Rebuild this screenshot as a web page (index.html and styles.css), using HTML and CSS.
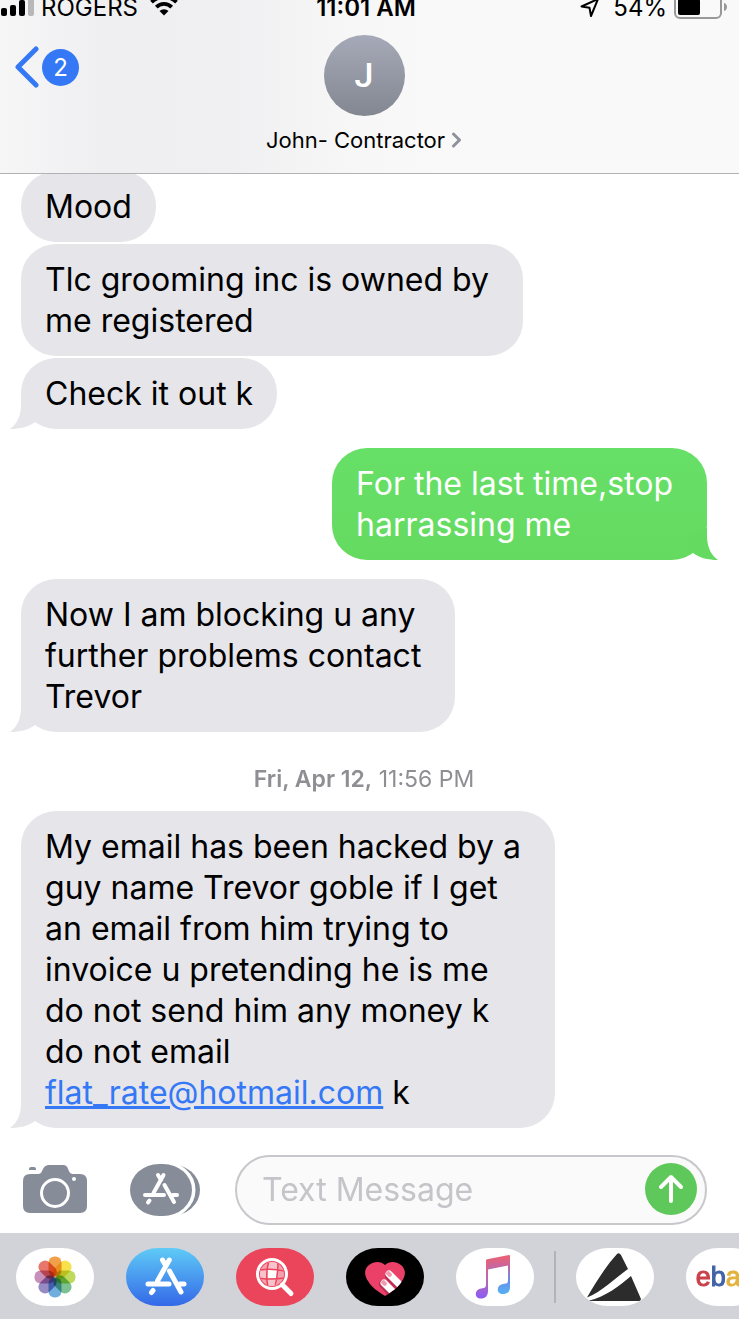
FILE: index.html
```
<!DOCTYPE html>
<html lang="en">
  <head>
    <meta charset="utf-8">
    <meta name="viewport" content="width=device-width, initial-scale=1">
    <title>Messages</title>
    <link rel="stylesheet" href="styles.css">
  </head>
  <body>
    <header class="header">
      <div class="status">
        <div class="status-left">
          <svg class="signal" width="35" height="18" viewBox="0 0 35 18">
            <rect x="1" y="9" width="6" height="8" rx="2"/>
            <rect x="10" y="6" width="6" height="11" rx="2"/>
            <rect x="19" y="1" width="6" height="16" rx="2"/>
            <rect x="28" y="-5" width="6" height="22" rx="2" fill="#b8b8ba"/>
          </svg>
          <span>ROGERS</span>
          <svg class="wifi" width="28" height="22" viewBox="0 0 28 22">
            <path d="M14 21.500l-4.500-4.500a6.400 6.400 0 0 1 9 0z"/>
            <path d="M6.300 13.200a10.800 10.800 0 0 1 15.400 0M1.500 8.200a17.600 17.600 0 0 1 25 0" fill="none" stroke="#000" stroke-width="3.800"/>
          </svg>
        </div>
        <strong class="status-time">11:01 AM</strong>
        <div class="status-right">
          <svg class="location" width="20" height="20" viewBox="0 0 20 20">
            <path d="M18 1L11 18 9.500 9.800 1.500 8.500z" fill="none" stroke="#000" stroke-width="2" stroke-linejoin="round"/>
          </svg>
          <span>54%</span>
          <svg class="battery" width="54" height="24" viewBox="0 0 54 24">
            <rect x="1" y="1" width="46" height="22" rx="5" fill="none" stroke="#98989a" stroke-width="2"/>
            <rect x="4" y="4" width="22" height="16" rx="2"/>
            <path d="M50 8c4 1 4 7 0 8z" fill="#98989a"/>
          </svg>
        </div>
      </div>
      <nav class="nav">
        <a class="back" href="#conversations" aria-label="Back, 2 unread">
          <svg width="26" height="42" viewBox="0 0 26 42">
            <path d="M22 3L4 21l18 18" fill="none" stroke="#3478f6" stroke-width="5" stroke-linecap="round" stroke-linejoin="round"/>
          </svg>
          <span class="unread">2</span>
        </a>
        <a class="contact" href="#contact">
          <span class="avatar">J</span>
          <span class="contact-name">John- Contractor
            <svg width="11" height="16" viewBox="0 0 11 16">
              <path d="M2.500 2L8.500 8l-6 6" fill="none" stroke="#8d929c" stroke-width="3" stroke-linecap="round" stroke-linejoin="round"/>
            </svg>
          </span>
        </a>
      </nav>
    </header>

    <main class="messages">
      <div class="bubble">Mood</div>
      <div class="bubble wrapped">Tlc grooming inc is owned by<br>me registered</div>
      <div class="bubble last">Check it out k
        <svg class="tail" width="32" height="32" viewBox="0 0 32 32">
          <path d="M11 0V8C11 20 6 28 0 32C10 32 18 30 25 25L32 10z"/>
        </svg>
      </div>
      <div class="bubble sent wrapped last">For the last time,stop<br>harrassing me
        <svg class="tail" width="32" height="32" viewBox="0 0 32 32">
          <path d="M21 0V8C21 20 26 28 32 32C22 32 14 30 7 25L0 10z"/>
        </svg>
      </div>
      <div class="bubble wrapped last">Now I am blocking u any<br>further problems contact<br>Trevor
        <svg class="tail" width="32" height="32" viewBox="0 0 32 32">
          <path d="M11 0V8C11 20 6 28 0 32C10 32 18 30 25 25L32 10z"/>
        </svg>
      </div>
      <time class="stamp"><b>Fri, Apr 12,</b> 11:56 PM</time>
      <div class="bubble wrapped last">My email has been hacked by a<br>guy name Trevor goble if I get<br>an email from him trying to<br>invoice u pretending he is me<br>do not send him any money k<br>do not email<br><a href="mailto:flat_rate@hotmail.com">flat_rate@hotmail.com</a> k
        <svg class="tail" width="32" height="32" viewBox="0 0 32 32">
          <path d="M11 0V8C11 20 6 28 0 32C10 32 18 30 25 25L32 10z"/>
        </svg>
      </div>
    </main>

    <form class="composer">
      <button class="tool" type="button" aria-label="Camera">
        <svg width="64" height="50" viewBox="0 0 64 50">
          <path d="M6 5V4q0-2 2-2h3q2 0 2 2v1z" fill="#868c98"/>
          <path d="M7 9h8q3 0 4-3l1-2q2-4 6-4h14q4 0 5 4l1 2q1 3 4 3h7q7 0 7 7v25q0 7-7 7H7q-7 0-7-7V16q0-7 7-7z" fill="#868c98"/>
          <circle cx="32" cy="28" r="13.500" fill="none" stroke="#fff" stroke-width="3"/>
          <circle cx="51" cy="14" r="2" fill="#fff"/>
        </svg>
      </button>
      <button class="tool" type="button" aria-label="Apps">
        <svg width="70" height="52" viewBox="0 0 70 52">
          <rect x="8" width="62" height="52" rx="30" ry="26" fill="#868c98"/>
          <rect x="-2" y="-2" width="66" height="56" rx="32" ry="28" fill="#fff" stroke="#fff" stroke-width="3"/>
          <rect width="62" height="52" rx="29" ry="26" fill="#868c98"/>
          <path d="M33.500 11L23.500 29M28 11l3 5M15 31h19M43 31h4M34.500 21l9.500 17M19.500 36.500L18 38.500" fill="none" stroke="#fff" stroke-width="4" stroke-linecap="round"/>
        </svg>
      </button>
      <div class="field">
        <input type="text" placeholder="Text Message" aria-label="Text Message">
        <button class="send" type="submit" aria-label="Send">
          <svg width="52" height="52" viewBox="0 0 52 52">
            <path d="M26 38V14M16 24l10-10 10 10" fill="none" stroke="#fff" stroke-width="4" stroke-linecap="round" stroke-linejoin="round"/>
          </svg>
        </button>
      </div>
    </form>

    <footer class="dock">
      <button class="app" type="button" aria-label="Photos">
        <svg width="78" height="58" viewBox="0 0 78 58">
          <g class="petals" transform="translate(39 29)">
            <rect x="-6.500" y="-20.500" width="13" height="20" rx="6" fill="#f0a04b"/>
            <rect x="-6.500" y="-20.500" width="13" height="20" rx="6" fill="#f7e24c" transform="rotate(45)"/>
            <rect x="-6.500" y="-20.500" width="13" height="20" rx="6" fill="#bfd95c" transform="rotate(90)"/>
            <rect x="-6.500" y="-20.500" width="13" height="20" rx="6" fill="#7cc192" transform="rotate(135)"/>
            <rect x="-6.500" y="-20.500" width="13" height="20" rx="6" fill="#70aede" transform="rotate(180)"/>
            <rect x="-6.500" y="-20.500" width="13" height="20" rx="6" fill="#978bc4" transform="rotate(225)"/>
            <rect x="-6.500" y="-20.500" width="13" height="20" rx="6" fill="#c78fba" transform="rotate(270)"/>
            <rect x="-6.500" y="-20.500" width="13" height="20" rx="6" fill="#e8766a" transform="rotate(315)"/>
          </g>
        </svg>
      </button>
      <button class="app app-store" type="button" aria-label="App Store">
        <svg width="78" height="58" viewBox="0 0 78 58">
          <path d="M43.300 12L31.500 33M36.500 12l3.500 6M22 36h21M54 36h4M43.500 23l11.500 21M27 42.500l-1.500 2" fill="none" stroke="#fff" stroke-width="5" stroke-linecap="round"/>
        </svg>
      </button>
      <button class="app app-images" type="button" aria-label="Images">
        <svg width="78" height="58" viewBox="0 0 78 58">
          <clipPath id="lens"><circle cx="36" cy="26" r="12"/></clipPath>
          <g clip-path="url(#lens)">
            <path d="M24 14h24v24H24z" fill="#f4a0ae"/>
            <path d="M32 14h9v8h-9zM24 22h8v8h-8zM32 30h9v8h-9z" fill="#f9c3cc"/>
            <path d="M32 22h9v8h-9z" fill="#fff"/>
            <path d="M24 22q12-2 24 1M23 30q13 2 25 0M33 13q-4 13-1 26M42 14q0 12-3 25" fill="none" stroke="#eb455b" stroke-width="1.500"/>
          </g>
          <circle cx="36" cy="26" r="14.500" fill="none" stroke="#fff" stroke-width="3"/>
          <path d="M46.500 37l8.500 8.500" stroke="#fff" stroke-width="5" stroke-linecap="round"/>
        </svg>
      </button>
      <button class="app app-touch" type="button" aria-label="Digital Touch">
        <svg width="78" height="58" viewBox="0 0 78 58">
          <clipPath id="heart"><path d="M39 17c4-4 11-4 16 0c5 4 5 11 1 16C52 40 45 44 39 48C33 44 26 40 22 33c-4-6-4-12 1-16c5-4 12-4 16 0z"/></clipPath>
          <g clip-path="url(#heart)">
            <path d="M15 8h48v44H15z" fill="#eb4168"/>
            <path d="M43 28l14 15M37 36l12 13" stroke="#b92e50" stroke-width="8" stroke-linecap="round"/>
            <path d="M43 26l16 16M38 35l14 14" stroke="#fff" stroke-width="7" stroke-linecap="round"/>
          </g>
          <path d="M40 26q0-3 3-3l3 3q0 3-3 3zM35 35q0-3 3-3l3 3q0 3-3 3z" fill="#f29aaf"/>
        </svg>
      </button>
      <button class="app" type="button" aria-label="Music">
        <svg width="78" height="58" viewBox="0 0 78 58">
          <defs>
            <linearGradient id="note" x1="0" y1="0" x2="0" y2="1">
              <stop offset="0" stop-color="#f0606c"/>
              <stop offset=".3" stop-color="#c766a0"/>
              <stop offset=".6" stop-color="#6a8ce8"/>
              <stop offset="1" stop-color="#54b0f4"/>
            </linearGradient>
            <linearGradient id="note-left" x1="0" y1="0" x2="0" y2="1">
              <stop offset="0" stop-color="#f0606c"/>
              <stop offset=".5" stop-color="#b867b4"/>
              <stop offset="1" stop-color="#8a5cf6"/>
            </linearGradient>
          </defs>
          <path d="M30 12.500q0-1 1-1.200L53 7q1 0 1 1v31c0 5-3 7-7 7c-7 0-7-9 0-10l3-.5q2-.5 2-3V17.500L32 21.500z" fill="url(#note)"/>
          <path d="M30 12.500L32 12V43c0 5-3 7.500-7 7.500c-7 0-7-9 0-10l3-.5q2-.5 2-3z" fill="url(#note-left)"/>
        </svg>
      </button>
      <span class="divider"></span>
      <button class="app" type="button" aria-label="Photo editor">
        <svg width="78" height="58" viewBox="0 0 78 58">
          <path d="M41 6q2-2 4 1l7 14C38 31 27 43 11 49.500C20 34 30 18 41 6zM55 28l10 23q0 2-2 2H12C31 48 43 38 55 28z" fill="#2c2c2d"/>
        </svg>
      </button>
      <button class="app app-ebay" type="button"><span class="red">e</span><span class="blue">b</span><span class="yellow">a</span><span class="green">y</span></button>
    </footer>
  </body>
</html>
```
FILE: styles.css
```
* {
  box-sizing: border-box;
}
body {
  margin: 0;
  min-height: 100vh;
  display: flex;
  flex-direction: column;
  background: #fff;
  color: #000;
  font-family: Inter, "Liberation Sans", sans-serif;
  overflow-x: hidden;
}
button {
  padding: 0;
  border: 0;
  background: none;
  font: inherit;
  flex: none;
}
svg {
  display: block;
  flex: none;
}
a {
  color: #3478f6;
}

/* header */
.header {
  position: relative;
  z-index: 1;
  padding-right: 11px;
  border-bottom: 1px solid #b2b2b4;
  background: linear-gradient(90deg, #f6f6f7, #efeff1 14%, #f0f0f2 32%, #f7f7f7 48%, #f9f9f9 60%);
}
.status {
  display: grid;
  grid-template-columns: 1fr auto 1fr;
  grid-template-rows: 16px;
  line-height: 16px;
  font-size: 24px;
}
.status-left,
.status-right {
  display: flex;
  align-items: center;
}
.status-left {
  gap: 6px;
}
.status-right {
  justify-content: flex-end;
  gap: 7px;
}
.wifi {
  margin: 0 0 6px 6px;
}
.location {
  margin-right: 6px;
}
.battery {
  margin-bottom: 2px;
}
.status-time {
  padding-left: 4px;
  font-weight: 600;
}
.nav {
  display: grid;
  grid-template-columns: 1fr auto 1fr;
  padding: 19px 0;
}
.nav a {
  text-decoration: none;
}
.back {
  display: flex;
  align-items: center;
  align-self: start;
  gap: 2px;
  padding: 11px 0 0 14px;
}
.unread {
  width: 37px;
  border-radius: 50%;
  background: #3478f6;
  color: #fff;
  font-size: 24px;
  line-height: 37px;
  text-align: center;
}
.contact {
  display: flex;
  flex-direction: column;
  align-items: center;
  gap: 10px;
  color: #000;
}
.avatar {
  width: 81px;
  border-radius: 50%;
  background: linear-gradient(#a6aab8, #838791);
  color: #fff;
  font-family: Roboto, "Liberation Sans", sans-serif;
  font-size: 34px;
  font-weight: 500;
  line-height: 81px;
  text-align: center;
}
.contact-name {
  display: flex;
  align-items: center;
  gap: 6px;
  font-size: 22px;
  line-height: 28px;
}

/* conversation */
.messages {
  flex: 1;
  display: flex;
  flex-direction: column;
  align-items: flex-start;
  gap: 2px;
  margin-top: -3px;
  padding: 0 32px 24px 21px;
}
.bubble {
  position: relative;
  padding: 15px 24px;
  border-radius: 35px;
  background: #e5e5ea;
  font-size: 32px;
  line-height: 41px;
}
.wrapped {
  padding-right: 34px;
}
.last {
  margin-bottom: 17px;
}
.last:last-child {
  margin-bottom: 0;
}
.sent {
  align-self: flex-end;
  background: linear-gradient(#67e067, #65da61);
  color: #fff;
}
.tail {
  position: absolute;
  left: -11px;
  bottom: 0;
  fill: #e5e5ea;
}
.sent .tail {
  left: auto;
  right: -11px;
  fill: #65da61;
}
.stamp {
  align-self: center;
  padding: 14px 0 16px;
  color: #8e8e93;
  font-size: 23px;
  line-height: 28px;
}
.stamp b {
  font-weight: 600;
}

/* message box */
.composer {
  display: flex;
  align-items: center;
  padding: 0 32px 8px 23px;
}
.tool {
  margin-right: 43px;
}
.field {
  flex: 1;
  display: flex;
  align-items: center;
  min-width: 0;
  height: 70px;
  margin-left: -8px;
  padding: 0 8px 2px 25px;
  border: 2px solid #c7c7cc;
  border-radius: 35px;
  background: #fafafa;
}
.field input {
  flex: 1;
  min-width: 0;
  padding: 0;
  border: 0;
  outline: 0;
  background: none;
  font: inherit;
  font-size: 32px;
}
.field input::placeholder {
  color: #c4c4c9;
}
.send {
  border-radius: 50%;
  background: #5ec95a;
}

/* app strip */
.dock {
  display: flex;
  align-items: center;
  gap: 32px;
  padding: 15px 0 13px 16px;
  background: #d1d3d8;
  overflow: hidden;
}
.app {
  width: 78px;
  height: 58px;
  border-radius: 32px / 29px;
  background: #fff;
  overflow: hidden;
}
.app-store {
  background: linear-gradient(#5fcbf6, #3468e8);
}
.app-images {
  background: #eb455b;
}
.app-touch {
  background: #000;
}
.app-ebay {
  font-family: "Liberation Sans", sans-serif;
  font-size: 27px;
  -webkit-text-stroke: 1px;
}
.petals {
  isolation: isolate;
}
.petals rect {
  mix-blend-mode: multiply;
}
.divider {
  flex: none;
  width: 2px;
  height: 52px;
  margin: 0 -12px;
  background: #b1b3b8;
}
.red {
  color: #c8414b;
}
.blue {
  color: #4262a8;
}
.yellow {
  color: #e3b23c;
}
.green {
  color: #8ab43f;
}
```
